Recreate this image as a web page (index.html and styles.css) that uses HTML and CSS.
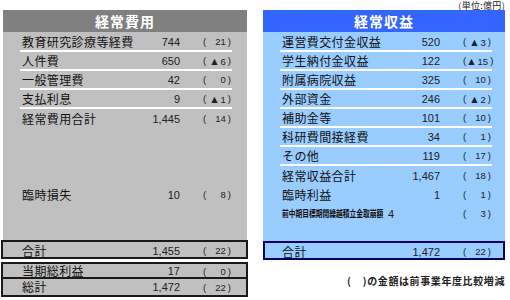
FILE: index.html
```html
<!DOCTYPE html>
<html lang="ja">
<head>
<meta charset="utf-8">
<link rel="stylesheet" href="styles.css">
</head>
<body>
<div class="unit">(単位:億円)</div>
<div class="panels">
  <div class="col col-left">
    <div class="panel">
      <div class="head gray-head">経常費用</div>
      <div class="body gray-body">
        <div class="row sep"><span class="lbl">教育研究診療等経費</span><span class="num">744</span><span class="p"><i>(</i><b>21</b><i>)</i></span></div>
        <div class="row sep"><span class="lbl">人件費</span><span class="num">650</span><span class="p"><i>(</i><b><u>▲</u>6</b><i>)</i></span></div>
        <div class="row sep"><span class="lbl">一般管理費</span><span class="num">42</span><span class="p"><i>(</i><b>0</b><i>)</i></span></div>
        <div class="row sep"><span class="lbl">支払利息</span><span class="num">9</span><span class="p"><i>(</i><b><u>▲</u>1</b><i>)</i></span></div>
        <div class="row"><span class="lbl">経常費用合計</span><span class="num">1,445</span><span class="p"><i>(</i><b>14</b><i>)</i></span></div>
        <div class="spacer-left"></div>
        <div class="row"><span class="lbl">臨時損失</span><span class="num">10</span><span class="p"><i>(</i><b>8</b><i>)</i></span></div>
      </div>
    </div>
    <div class="box gbox first">
      <div class="row"><span class="lbl">合計</span><span class="num">1,455</span><span class="p"><i>(</i><b>22</b><i>)</i></span></div>
    </div>
    <div class="box gbox second">
      <div class="row short"><span class="lbl">当期総利益</span><span class="num">17</span><span class="p"><i>(</i><b>0</b><i>)</i></span></div>
    </div>
    <div class="box gbox third">
      <div class="row short"><span class="lbl">総計</span><span class="num">1,472</span><span class="p"><i>(</i><b>22</b><i>)</i></span></div>
    </div>
  </div>
  <div class="col col-right">
    <div class="head blue-head">経常収益</div>
    <div class="body blue-body">
      <div class="row sep"><span class="lbl">運営費交付金収益</span><span class="num">520</span><span class="p"><i>(</i><b><u>▲</u>3</b><i>)</i></span></div>
      <div class="row sep"><span class="lbl">学生納付金収益</span><span class="num">122</span><span class="p"><i>(</i><b><u>▲</u>15</b><i>)</i></span></div>
      <div class="row sep"><span class="lbl">附属病院収益</span><span class="num">325</span><span class="p"><i>(</i><b>10</b><i>)</i></span></div>
      <div class="row sep"><span class="lbl">外部資金</span><span class="num">246</span><span class="p"><i>(</i><b><u>▲</u>2</b><i>)</i></span></div>
      <div class="row sep"><span class="lbl">補助金等</span><span class="num">101</span><span class="p"><i>(</i><b>10</b><i>)</i></span></div>
      <div class="row sep"><span class="lbl">科研費間接経費</span><span class="num">34</span><span class="p"><i>(</i><b>1</b><i>)</i></span></div>
      <div class="row sep"><span class="lbl">その他</span><span class="num">119</span><span class="p"><i>(</i><b>17</b><i>)</i></span></div>
      <div class="row"><span class="lbl">経常収益合計</span><span class="num">1,467</span><span class="p"><i>(</i><b>18</b><i>)</i></span></div>
      <div class="row"><span class="lbl">臨時利益</span><span class="num">1</span><span class="p"><i>(</i><b>1</b><i>)</i></span></div>
      <div class="row long"><span class="lbl small"><span class="squeeze">前中期目標期間繰越積立金取崩額</span></span><span class="num">4</span><span class="p"><i>(</i><b>3</b><i>)</i></span></div>
    </div>
    <div class="box bbox">
      <div class="row"><span class="lbl">合計</span><span class="num">1,472</span><span class="p"><i>(</i><b>22</b><i>)</i></span></div>
    </div>
    <div class="note">(&nbsp;&nbsp;&nbsp;&nbsp;)の金額は前事業年度比較増減</div>
  </div>
</div>
</body>
</html>
```
FILE: styles.css
```css
* { box-sizing: border-box; }
html, body { margin: 0; padding: 0; }
body {
  width: 510px;
  height: 300px;
  background: #ffffff;
  font-family: "Noto Sans CJK JP", "Noto Sans", sans-serif;
  color: #111;
  overflow: hidden;
}
.unit {
  height: 10px;
  line-height: 11px;
  font-size: 9px;
  letter-spacing: 0.3px;
  text-align: right;
  padding-right: 5px;
  color: #222;
}
.panels {
  display: flex;
  padding-left: 1px;
  gap: 15px;
}
.col-left { width: 247px; }
.col-right { width: 242px; }
.panel { margin: 0 1px 0 2px; }
.head {
  height: 22px;
  display: flex;
  align-items: center;
  justify-content: center;
  color: #fff;
  font-weight: bold;
  font-size: 14px;
  letter-spacing: 1px;
}
.gray-head { background: #808080; }
.blue-head { background: #3366ff; }
.body { padding-top: 1px; }
.gray-body { background: #c0c0c0; height: 208px; }
.blue-body { background: #99ccff; height: 209px; }
.row {
  display: grid;
  grid-template-columns: minmax(0, 1fr) 40px 52px;
  align-items: center;
  height: 19px;
  margin: 0 15px 0 17px;
}
.col-right .row { margin: 0 13px 0 17px; }
.row.sep { border-bottom: 2px solid #ffffff; }
.lbl {
  padding-left: 2px;
  font-size: 12px;
  letter-spacing: 0.4px;
  white-space: nowrap;
  line-height: 17px;
  overflow: visible;
}
.lbl.small { font-size: 9.5px; letter-spacing: 0; font-weight: bold; }
.squeeze {
  display: inline-block;
  transform: scaleX(0.71);
  transform-origin: left center;
}
.num {
  font-family: "Liberation Sans", Arial, sans-serif;
  font-size: 11px;
  color: #222;
  text-align: right;
}
.row.long .num { text-align: left; margin-left: -12px; }
.p {
  display: flex;
  align-items: center;
  margin-left: 23px;
  width: 28px;
  font-family: "Liberation Sans", Arial, sans-serif;
  font-size: 9.5px;
  color: #222;
}
.p i { font-style: normal; }
.p b {
  font-weight: normal;
  flex: 1;
  text-align: right;
  padding-right: 2px;
  white-space: nowrap;
}
.p u {
  text-decoration: none;
  font-size: 10.5px;
  margin-right: 1px;
}
.spacer-left { height: 57px; }
.box { background: #c0c0c0; }
.gbox { border: 2px solid #1a1a1a; }
.gbox .row { margin: 0 14px 0 17px; }
.gbox.first { height: 19px; }
.gbox.first .row { height: 15px; }
.gbox.second { margin-top: 3px; height: 17px; }
.gbox.second .row, .gbox.third .row { height: 14px; }
.gbox.second .lbl, .gbox.third .lbl { line-height: 14px; }
.gbox.third { border-top: 0; height: 18px; }
.gbox.third .row { height: 16px; }
.bbox {
  background: #99ccff;
  border: 2px solid #000066;
  height: 19px;
}
.bbox .row { height: 15px; margin: 0 11px 0 15px; }
.note {
  margin-top: 15px;
  text-align: right;
  padding-right: 0;
  font-size: 10px;
  letter-spacing: 0.6px;
  font-weight: bold;
  line-height: 12px;
  color: #222;
}
```
